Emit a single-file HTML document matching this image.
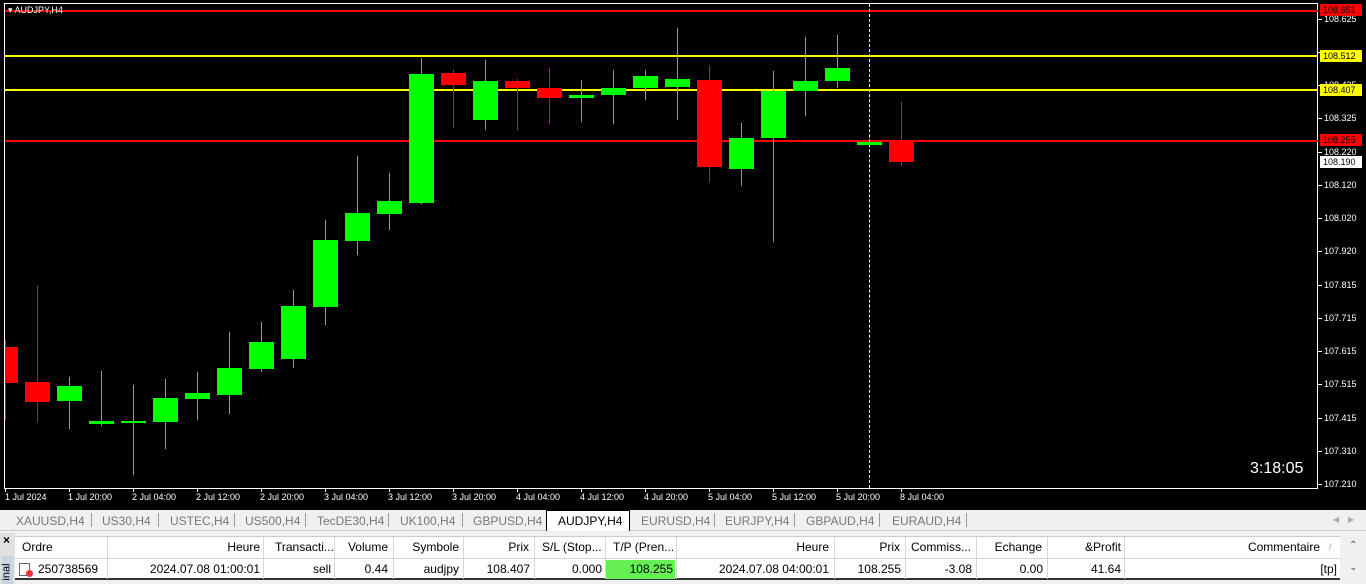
<!DOCTYPE html>
<html><head><meta charset="utf-8"><style>
*{margin:0;padding:0;box-sizing:border-box}
body{width:1366px;height:584px;background:#f0f0f0;position:relative;overflow:hidden;font-family:"Liberation Sans",sans-serif}
#chart{position:absolute;left:0;top:0;width:1366px;height:508px;background:#000}
.a{position:absolute}
.pl{position:absolute;left:1324px;color:#fff;font-size:9px;line-height:10px}
.tl{position:absolute;top:492px;color:#fff;font-size:9px}
.lab{position:absolute;left:1320px;width:42px;height:12px;font-size:9px;line-height:12px;padding-left:3px;color:#000}
.tabs{position:absolute;top:510px;left:0;width:1366px;height:21px;background:#f0f0f0;border-bottom:1px solid #ccc;font-size:12px;color:#777}
.tab{position:absolute;top:4px}
.sep{position:absolute;top:3px;width:1px;height:14px;background:#999}
.cell{position:absolute;font-size:12px;color:#000;white-space:nowrap;line-height:20px}
.vl{position:absolute;width:1px;background:#d8d8d8}
</style></head><body>
<div id="chart">
<div class="a" style="left:4px;top:3px;width:1314px;height:486px;border:1px solid #fff;border-right:1px solid #fff"></div>
<div class="a" style="left:5px;top:4px;width:1312px;height:484px;background:#000"></div>
<div class="a" style="left:5px;top:10px;width:1313px;height:2px;background:#f00"></div>
<div class="a" style="left:5px;top:55px;width:1313px;height:2px;background:#ff0"></div>
<div class="a" style="left:5px;top:89px;width:1313px;height:2px;background:#ff0"></div>
<div class="a" style="left:5px;top:140px;width:1313px;height:2px;background:#f00"></div>
<div class="a" style="left:869px;top:4px;height:484px;border-left:1px dashed #fff"></div>
<div class="a" style="left:8px;top:5px;color:#fff;font-size:9px">&#9662; AUDJPY,H4</div>
<div id="c"></div>
<div class="pl" style="top:14px">108.625</div>
<div class="pl" style="top:80px">108.435</div>
<div class="pl" style="top:113px">108.325</div>
<div class="pl" style="top:147px">108.220</div>
<div class="pl" style="top:180px">108.120</div>
<div class="pl" style="top:213px">108.020</div>
<div class="pl" style="top:246px">107.920</div>
<div class="pl" style="top:280px">107.815</div>
<div class="pl" style="top:313px">107.715</div>
<div class="pl" style="top:346px">107.615</div>
<div class="pl" style="top:379px">107.515</div>
<div class="pl" style="top:413px">107.415</div>
<div class="pl" style="top:446px">107.310</div>
<div class="pl" style="top:479px">107.210</div>
<div class="lab" style="top:4px;background:#f00">108.651</div>
<div class="lab" style="top:50px;background:#ff0">108.512</div>
<div class="lab" style="top:84px;background:#ff0">108.407</div>
<div class="lab" style="top:134px;background:#f00">108.255</div>
<div class="lab" style="top:156px;background:#fff">108.190</div>
<div class="a" style="left:1250px;top:460px;color:#fff;font-size:16px">3:18:05</div>
<div class="tl" style="left:5px">1 Jul 2024</div>
<div class="tl" style="left:68px">1 Jul 20:00</div>
<div class="tl" style="left:132px">2 Jul 04:00</div>
<div class="tl" style="left:196px">2 Jul 12:00</div>
<div class="tl" style="left:260px">2 Jul 20:00</div>
<div class="tl" style="left:324px">3 Jul 04:00</div>
<div class="tl" style="left:388px">3 Jul 12:00</div>
<div class="tl" style="left:452px">3 Jul 20:00</div>
<div class="tl" style="left:516px">4 Jul 04:00</div>
<div class="tl" style="left:580px">4 Jul 12:00</div>
<div class="tl" style="left:644px">4 Jul 20:00</div>
<div class="tl" style="left:708px">5 Jul 04:00</div>
<div class="tl" style="left:772px">5 Jul 12:00</div>
<div class="tl" style="left:836px">5 Jul 20:00</div>
<div class="tl" style="left:900px">8 Jul 04:00</div>
</div>
<div class="a" style="left:0;top:508px;width:1366px;height:2px;background:#000"></div>
<div class="tabs">
<span class="tab" style="left:16px">XAUUSD,H4</span><span class="sep" style="left:91px"></span>
<span class="tab" style="left:102px">US30,H4</span><span class="sep" style="left:158px"></span>
<span class="tab" style="left:170px">USTEC,H4</span><span class="sep" style="left:234px"></span>
<span class="tab" style="left:245px">US500,H4</span><span class="sep" style="left:305px"></span>
<span class="tab" style="left:317px">TecDE30,H4</span><span class="sep" style="left:388px"></span>
<span class="tab" style="left:400px">UK100,H4</span><span class="sep" style="left:462px"></span>
<span class="tab" style="left:473px">GBPUSD,H4</span>
<div class="a" style="left:546px;top:0;width:84px;height:21px;background:#fff;border:1px solid #000;border-bottom:none"></div>
<span class="tab" style="left:558px;color:#000">AUDJPY,H4</span>
<span class="tab" style="left:641px">EURUSD,H4</span><span class="sep" style="left:714px"></span>
<span class="tab" style="left:725px">EURJPY,H4</span><span class="sep" style="left:794px"></span>
<span class="tab" style="left:806px">GBPAUD,H4</span><span class="sep" style="left:879px"></span>
<span class="tab" style="left:892px">EURAUD,H4</span><span class="sep" style="left:966px"></span>
<span class="tab" style="left:1333px;font-size:8px;top:5px;color:#aaa">&#9664;&nbsp;&nbsp;&nbsp;&nbsp;&#9654;</span>
</div>
<div class="a" style="left:0;top:533px;width:15px;height:51px;background:#e0e0e0"></div>
<div class="a" style="left:3px;top:533px;font-size:12px;font-weight:bold">×</div>
<div class="a" style="left:2px;top:556px;width:11px;height:28px;background:#c8d4e4"></div>
<div class="a" style="left:-2px;top:566px;font-size:11px;transform:rotate(-90deg)">inal</div>
<div class="a" style="left:15px;top:536px;width:1325px;height:44px;background:#fff;border-top:1px solid #ccc;border-bottom:2px solid #333"></div>
<div class="a" style="left:15px;top:558px;width:1325px;height:1px;background:#d8d8d8"></div>
<div class="a" style="left:605px;top:560px;width:70px;height:19px;background:#66ee55"></div>
<div id="v"></div>
<div class="a" style="left:1340px;top:536px;width:26px;height:44px;background:#f0f0f0"></div>
<div class="a" style="left:1349px;top:540px;font-size:10px;color:#555">&#8963;</div>
<div class="a" style="left:1349px;top:562px;font-size:10px;color:#555">&#8964;</div>
<div class="cell" style="left:22px;top:537px">Ordre</div>
<div class="cell" style="left:108px;top:537px;width:152px;text-align:right">Heure</div>
<div class="cell" style="left:275px;top:537px">Transacti...</div>
<div class="cell" style="left:335px;top:537px;width:53px;text-align:right">Volume</div>
<div class="cell" style="left:394px;top:537px;width:65px;text-align:right">Symbole</div>
<div class="cell" style="left:464px;top:537px;width:65px;text-align:right">Prix</div>
<div class="cell" style="left:542px;top:537px">S/L (Stop...</div>
<div class="cell" style="left:613px;top:537px">T/P (Pren...</div>
<div class="cell" style="left:677px;top:537px;width:152px;text-align:right">Heure</div>
<div class="cell" style="left:835px;top:537px;width:65px;text-align:right">Prix</div>
<div class="cell" style="left:911px;top:537px">Commiss...</div>
<div class="cell" style="left:977px;top:537px;width:65px;text-align:right">Echange</div>
<div class="cell" style="left:1048px;top:537px;width:73px;text-align:right">&amp;Profit</div>
<div class="cell" style="left:1125px;top:537px;width:195px;text-align:right">Commentaire</div>
<div class="cell" style="left:1329px;top:537px;color:#999;font-size:9px">/</div>
<div class="a" style="left:19px;top:563px;width:11px;height:13px;border:1px solid #666;background:#fff"></div>
<div class="a" style="left:26px;top:570px;width:7px;height:7px;border-radius:50%;background:#e33"></div>
<div class="cell" style="left:38px;top:559px">250738569</div>
<div class="cell" style="left:108px;top:559px;width:152px;text-align:right">2024.07.08 01:00:01</div>
<div class="cell" style="left:264px;top:559px;width:67px;text-align:right">sell</div>
<div class="cell" style="left:335px;top:559px;width:53px;text-align:right">0.44</div>
<div class="cell" style="left:394px;top:559px;width:65px;text-align:right">audjpy</div>
<div class="cell" style="left:464px;top:559px;width:66px;text-align:right">108.407</div>
<div class="cell" style="left:535px;top:559px;width:67px;text-align:right">0.000</div>
<div class="cell" style="left:606px;top:559px;width:67px;text-align:right">108.255</div>
<div class="cell" style="left:677px;top:559px;width:152px;text-align:right">2024.07.08 04:00:01</div>
<div class="cell" style="left:835px;top:559px;width:66px;text-align:right">108.255</div>
<div class="cell" style="left:906px;top:559px;width:66px;text-align:right">-3.08</div>
<div class="cell" style="left:977px;top:559px;width:66px;text-align:right">0.00</div>
<div class="cell" style="left:1048px;top:559px;width:73px;text-align:right">41.64</div>
<div class="cell" style="left:1125px;top:559px;width:212px;text-align:right">[tp]</div>
<script>
var C=[[5,347,383,340,420,0],[37,382,402,285,422,0],[69,386,401,377,429,1],[101,421,424,371,426,1],[133,421,422,385,475,1],[165,398,422,379,449,1],[197,393,399,372,420,1],[229,368,395,332,414,1],[261,342,369,322,372,1],[293,306,359,290,368,1],[325,240,307,220,325,1],[357,213,241,156,255,1],[389,201,214,173,230,1],[421,74,203,58,204,1],[453,73,85,70,128,0],[485,81,120,60,130,1],[517,81,88,79,131,0],[549,88,98,68,124,0],[581,95,98,80,122,1],[613,88,95,70,124,1],[645,76,88,70,100,1],[677,79,87,28,120,1],[709,80,167,65,182,0],[741,138,169,123,186,1],[773,91,138,71,242,1],[805,81,91,37,116,1],[837,68,81,35,88,1],[869,142,145,142,145,1],[901,140,162,102,166,0]];
var h='';C.forEach(function(c){var col=c[5]?'#0f0':'#f00';var l=c[0]-12,w=25;if(c[0]<12){l=5;w=13}
h+='<div class="a" style="left:'+c[0]+'px;top:'+c[3]+'px;width:1px;height:'+(c[4]-c[3])+'px;background:'+col+'"></div>';
h+='<div class="a" style="left:'+l+'px;top:'+c[1]+'px;width:'+w+'px;height:'+Math.max(2,c[2]-c[1])+'px;background:'+col+'"></div>';});
for(var i=0;i<15;i++){h+='<div class="a" style="left:'+(5+64*i)+'px;top:488px;width:1px;height:4px;background:#fff"></div>'}
[19,52,85,118,152,185,218,251,285,318,351,384,418,451,484].forEach(function(y){h+='<div class="a" style="left:1318px;top:'+y+'px;width:4px;height:1px;background:#fff"></div>'});
document.getElementById('c').innerHTML=h;
var v='';[107,263,334,393,463,534,605,676,834,905,976,1047,1124].forEach(function(x){v+='<div class="vl" style="left:'+x+'px;top:537px;height:42px"></div>'});
document.getElementById('v').innerHTML=v;
</script>
</body></html>
